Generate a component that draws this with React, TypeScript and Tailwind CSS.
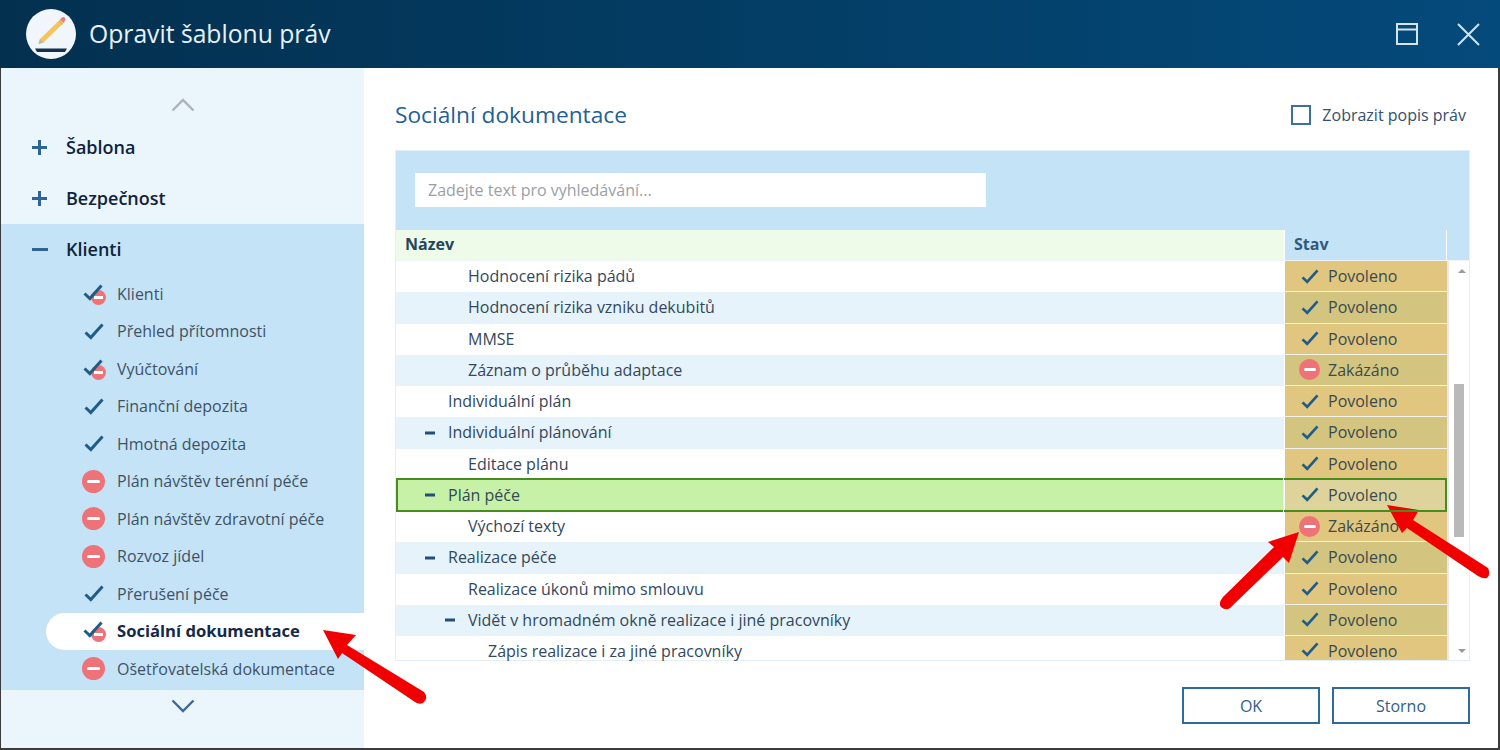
const FONT = "font-['Open_Sans',sans-serif]";

type NavState = "ok" | "no" | "mixed";

const NAV_ITEMS: { label: string; state: NavState; active?: boolean }[] = [
  { label: "Klienti", state: "mixed" },
  { label: "Přehled přítomnosti", state: "ok" },
  { label: "Vyúčtování", state: "mixed" },
  { label: "Finanční depozita", state: "ok" },
  { label: "Hmotná depozita", state: "ok" },
  { label: "Plán návštěv terénní péče", state: "no" },
  { label: "Plán návštěv zdravotní péče", state: "no" },
  { label: "Rozvoz jídel", state: "no" },
  { label: "Přerušení péče", state: "ok" },
  { label: "Sociální dokumentace", state: "mixed", active: true },
  { label: "Ošetřovatelská dokumentace", state: "no" },
];

const ROWS: { name: string; level: number; toggle?: boolean; denied?: boolean; selected?: boolean }[] = [
  { name: "Hodnocení rizika pádů", level: 2 },
  { name: "Hodnocení rizika vzniku dekubitů", level: 2 },
  { name: "MMSE", level: 2 },
  { name: "Záznam o průběhu adaptace", level: 2, denied: true },
  { name: "Individuální plán", level: 1 },
  { name: "Individuální plánování", level: 1, toggle: true },
  { name: "Editace plánu", level: 2 },
  { name: "Plán péče", level: 1, toggle: true, selected: true },
  { name: "Výchozí texty", level: 2, denied: true },
  { name: "Realizace péče", level: 1, toggle: true },
  { name: "Realizace úkonů mimo smlouvu", level: 2 },
  { name: "Vidět v hromadném okně realizace i jiné pracovníky", level: 2, toggle: true },
  { name: "Zápis realizace i za jiné pracovníky", level: 3 },
];

function Check({ className }: { className: string }) {
  return (
    <svg viewBox="0 0 20 17" className={className} fill="none">
      <path d="M1.5 9.5 L6.8 14.5 L18.5 1.5" stroke="#1f5c88" strokeWidth="3" />
    </svg>
  );
}

function Denied({ size }: { size: "sm" | "lg" }) {
  return (
    <div className={`flex items-center justify-center rounded-full bg-[#ee7379] ${size === "lg" ? "h-[23px] w-[23px]" : "h-[21px] w-[21px]"}`}>
      <div className={`h-[3px] rounded-sm bg-white ${size === "lg" ? "w-[13px]" : "w-[12px]"}`} />
    </div>
  );
}

function NavIcon({ state }: { state: NavState }) {
  if (state === "ok") return <Check className="h-[17px] w-[20px]" />;
  if (state === "no") return <Denied size="lg" />;
  return (
    <div className="relative h-[20px] w-[22px]">
      <div className="absolute bottom-[-1px] right-[-1px] flex h-[15px] w-[15px] items-center justify-center rounded-full bg-[#ee7379]">
        <div className="h-[3px] w-[9px] bg-white" />
      </div>
      <Check className="absolute left-0 top-0 h-[17px] w-[20px]" />
    </div>
  );
}

function GroupRow({ label, open }: { label: string; open?: boolean }) {
  return (
    <div className={`flex h-[51px] items-center pl-[31px] ${open ? "bg-[#c5e3f6]" : ""}`}>
      <div className="relative flex h-[15px] w-[34px] items-center">
        <div className={`h-[3px] bg-[#2e6596] ${open ? "w-[16px]" : "w-[15px]"}`} />
        {!open && <div className="absolute left-[6px] top-0 h-[15px] w-[3px] bg-[#2e6596]" />}
      </div>
      <span className="text-[18px] font-semibold text-[#10233a]">{label}</span>
    </div>
  );
}

function Sidebar() {
  return (
    <aside className="flex w-[363px] shrink-0 flex-col bg-[#eaf5fc]">
      <div className="flex h-[54px] items-end justify-center pb-[10px]">
        <svg viewBox="0 0 24 14" className="h-[14px] w-[24px]" fill="none">
          <path d="M1.5 12.5 L12 2 L22.5 12.5" stroke="#adb3b6" strokeWidth="2.4" />
        </svg>
      </div>
      <GroupRow label="Šablona" />
      <GroupRow label="Bezpečnost" />
      <GroupRow label="Klienti" open />
      <div className="flex flex-col bg-[#c5e3f6] pb-[2px] pl-[45px]">
        {NAV_ITEMS.map((item) => (
          <div
            key={item.label}
            className={`flex h-[37.5px] items-center rounded-l-full ${item.active ? "bg-white" : ""}`}
          >
            <div className="flex w-[71px] justify-center pl-[24px]">
              <NavIcon state={item.state} />
            </div>
            <span className={item.active ? "text-[16.6px] font-bold text-[#14294a]" : "text-[16px] text-[#3e5266]"}>
              {item.label}
            </span>
          </div>
        ))}
      </div>
      <div className="flex justify-center pt-[9px]">
        <svg viewBox="0 0 24 14" className="h-[14px] w-[24px]" fill="none">
          <path d="M1.5 1.5 L12 12 L22.5 1.5" stroke="#3d6a96" strokeWidth="2.4" />
        </svg>
      </div>
    </aside>
  );
}

function TableRow({ row, index, last }: { row: (typeof ROWS)[number]; index: number; last: boolean }) {
  const odd = index % 2 === 1;
  const pad = row.level === 1 ? "pl-[52px]" : row.level === 2 ? "pl-[72px]" : "pl-[92px]";
  const nameBg = row.selected ? "bg-[#c7f1a6]" : odd ? "bg-[#e6f3fa]" : "bg-white";
  const stavBg = row.selected ? "bg-[#dfd39c]" : odd ? "bg-[#d3c47f]" : "bg-[#e0c67e]";
  // the last row stops at the bottom of the panel
  return (
    <div className={`relative flex shrink-0 ${last ? "h-[24px]" : "h-[31.25px]"}`}>
      <div className={`relative flex min-w-0 flex-1 ${last ? "items-start pt-[6px]" : "items-center pb-px"} ${pad} ${nameBg}`}>
        {row.toggle && (
          <div className={`absolute top-1/2 h-[3px] w-[10px] -translate-y-1/2 bg-[#1f4f7a] ${row.level === 1 ? "left-[29px]" : "left-[49px]"}`} />
        )}
        <span className={`text-[16px] leading-[18px] ${row.selected ? "text-[#2f4a55]" : "text-[#33485c]"}`}>{row.name}</span>
      </div>
      <div className={`ml-px flex w-[162px] shrink-0 ${last ? "items-start pt-[6px]" : "items-center border-b border-b-[#f3f3ea]"} ${stavBg}`}>
        <div className="flex w-[43px] shrink-0 justify-center pl-[6px]">
          {row.denied ? <Denied size="sm" /> : <Check className="h-[15px] w-[18px]" />}
        </div>
        <span className="text-[16px] leading-[18px] text-[#3b4a50]">{row.denied ? "Zakázáno" : "Povoleno"}</span>
      </div>
      {row.selected && (
        <div className="absolute -bottom-px -top-[2px] left-0 right-0 z-10 border-2 border-[#4a8b20]">
          <div className="absolute -bottom-[2px] -top-[2px] right-[161px] w-px bg-[#e8f3dc]" />
        </div>
      )}
    </div>
  );
}

function PermissionTable() {
  return (
    <div className="flex h-[511px] flex-col border border-[#e4eef7] bg-white">
      <div className="flex h-[79px] shrink-0 items-start bg-[#c5e3f6] pl-[19px] pt-[22px]">
        <div className="flex h-[34px] w-[571px] items-center bg-white pl-[13px] text-[16px] text-[#9aa0a6]">
          Zadejte text pro vyhledávání...
        </div>
      </div>
      <div className="flex h-[30px] shrink-0 text-[16px] font-bold">
        <div className="flex flex-1 items-center bg-[#eefbe9] pb-[2px] pl-[9px] text-[#24465f]">Název</div>
        <div className="ml-px flex w-[161px] items-center bg-[#c5e3f6] pb-[2px] pl-[9px] text-[#2f5a80]">Stav</div>
        <div className="ml-px w-[22px] bg-[#c5e3f6]" />
      </div>
      <div className="flex min-h-0 flex-1 border-t border-[#eef3f6]">
        <div className="flex min-w-0 flex-1 flex-col">
          {ROWS.map((row, i) => (
            <TableRow key={row.name} row={row} index={i} last={i === ROWS.length - 1} />
          ))}
        </div>
        <div className="relative w-[22px] shrink-0 border-l-2 border-[#e8e8e8]">
          <div className="absolute left-[9px] top-[8px] h-0 w-0 border-x-[4px] border-b-[4px] border-x-transparent border-b-[#9a9a9a]" />
          <div className="absolute left-[5px] top-[123px] h-[153px] w-[10px] bg-[#b9b9b9]" />
          <div className="absolute bottom-[7px] left-[9px] h-0 w-0 border-x-[4px] border-t-[4px] border-x-transparent border-t-[#9a9a9a]" />
        </div>
      </div>
    </div>
  );
}

function Arrow({ d }: { d: string }) {
  return <path d={d} fill="#f00000" />;
}

export default function App() {
  return (
    <div className={`relative flex h-[750px] w-[1500px] flex-col overflow-hidden bg-white ${FONT}`}>
      <header className="flex h-[68px] shrink-0 items-center bg-gradient-to-r from-[#03304f] to-[#044a7b] pl-[26px] pr-[20px]">
        <div className="flex h-[50px] w-[50px] items-center justify-center rounded-full bg-[#f0f6fb]">
          <svg viewBox="0 0 50 50" className="h-[50px] w-[50px]">
            <path d="M12.5 35 L14 30 L34 10.5 L37.5 14 L17.5 33.5 Z" fill="#f7c35c" />
            <path d="M33 12 L36.5 15.5" stroke="#e0a545" strokeWidth="1" />
            <path d="M34 10.5 L36 8.5 Q38 7.5 39 9 Q40 11 37.5 14 Z" fill="#ef7a7a" />
            <path d="M12.5 35 L14 30 L17.5 33.5 Z" fill="#bdb7a6" />
            <path d="M9 39.5 H41 L39 43 H11 Z" fill="#14304c" />
          </svg>
        </div>
        <h1 className="ml-[13px] text-[24.7px] font-normal text-[#e9f2f8]">Opravit šablonu práv</h1>
        <div className="ml-auto flex items-center gap-[39px]">
          <svg viewBox="0 0 22 22" className="h-[22px] w-[22px]" fill="none" stroke="#d6e3ec" strokeWidth="2">
            <rect x="1" y="1" width="20" height="20" />
            <path d="M1 6.5 H21" />
          </svg>
          <svg viewBox="0 0 23 23" className="h-[23px] w-[23px]" fill="none" stroke="#d6e3ec" strokeWidth="2">
            <path d="M1 1 L22 22 M22 1 L1 22" />
          </svg>
        </div>
      </header>

      <div className="flex min-h-0 flex-1 border-b-2 border-l border-r-2 border-[#3c3c3c]">
        <Sidebar />
        <main className="flex min-w-0 flex-1 flex-col pl-[31px] pr-[28px]">
          <div className="flex h-[82px] shrink-0 items-center justify-between pt-[11px]">
            <h2 className="mt-[2px] text-[22.7px] font-normal text-[#1f6096]">Sociální dokumentace</h2>
            <div className="flex items-center gap-[11px] pr-[3px]">
              <div className="h-[20px] w-[20px] -translate-x-px border-2 border-[#3b6fa3] bg-white" />
              <span className="-translate-x-px text-[16px] text-[#33506e]">Zobrazit popis práv</span>
            </div>
          </div>
          <PermissionTable />
          <div className="flex justify-end gap-[12px] pt-[26px]">
            <button className="h-[37px] w-[138px] border-2 border-[#2f6a9c] text-[16px] text-[#2f5f8a]">OK</button>
            <button className="h-[37px] w-[138px] border-2 border-[#2f6a9c] text-[16px] text-[#2f5f8a]">Storno</button>
          </div>
        </main>
      </div>

      {/* annotation arrows */}
      <svg className="pointer-events-none absolute left-0 top-0 h-[750px] w-[1500px]" viewBox="0 0 1500 750">
        <Arrow d="M323 630 L356 635 L347 645 L424 692 Q429 698 423 703 Q419 705 415 702 L342 653 L338 659 Z" />
        <Arrow d="M1299 532 L1289 563 L1283 557 L1230 608 Q1226 611 1221 607 Q1218 603 1223 597 L1274 547 L1268 542 Z" />
        <Arrow d="M1387 505 L1419 510 L1413 520 L1488 568 Q1491 574 1487 578 Q1483 579 1478 576 L1407 528 L1402 533 Z" />
      </svg>
    </div>
  );
}
